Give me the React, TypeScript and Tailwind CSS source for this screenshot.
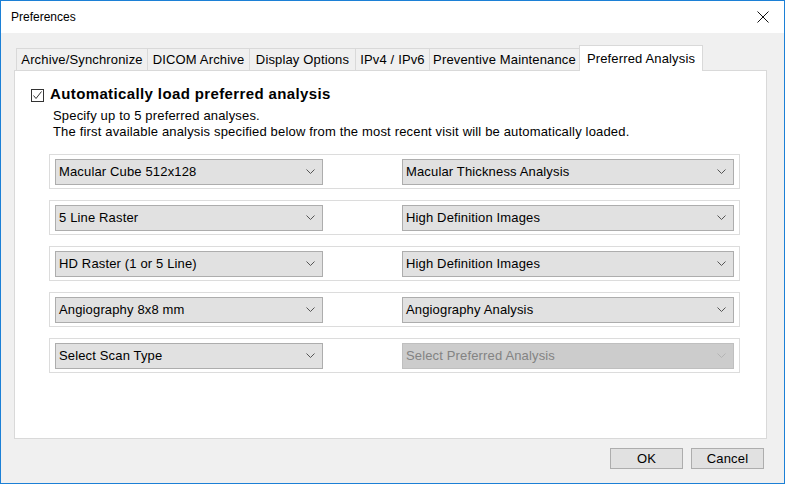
import React from "react"

const tabs = [
  { label: "Archive/Synchronize", w: "w-[132px]" },
  { label: "DICOM Archive", w: "w-[103px]" },
  { label: "Display Options", w: "w-[107px]" },
  { label: "IPv4 / IPv6", w: "w-[75px]" },
  { label: "Preventive Maintenance", w: "w-[151px]" },
]

const rows = [
  ["Macular Cube 512x128", "Macular Thickness Analysis"],
  ["5 Line Raster", "High Definition Images"],
  ["HD Raster (1 or 5 Line)", "High Definition Images"],
  ["Angiography 8x8 mm", "Angiography Analysis"],
  ["Select Scan Type", "Select Preferred Analysis"],
]

function Chevron({ color }: { color: string }) {
  return (
    <svg width="9" height="5" viewBox="0 0 9 5" className="shrink-0">
      <path d="M0.5 0.5 L4.5 4.5 L8.5 0.5" fill="none" stroke={color} strokeWidth="1" />
    </svg>
  )
}

function Select({ value, width, disabled }: { value: string; width: string; disabled?: boolean }) {
  return (
    <div
      className={
        disabled
          ? `${width} h-[26px] flex items-center justify-between pl-[3px] pr-[7px] border border-[#bfbfbf] bg-[#cccccc] text-[#838383]`
          : `${width} h-[26px] flex items-center justify-between pl-[3px] pr-[7px] border border-[#adadad] bg-[#e1e1e1] text-black`
      }
    >
      <span>{value}</span>
      <Chevron color={disabled ? "#b4b4b4" : "#555555"} />
    </div>
  )
}

export default function App() {
  return (
    <div
      className="w-[785px] h-[484px] flex flex-col border border-[#1c80d6] bg-[#f0f0f0] text-[13px] tracking-[0.15px] text-black"
      style={{ fontFamily: '"Liberation Sans", Arial, sans-serif' }}
    >
      {/* title bar */}
      <div className="h-[32px] shrink-0 bg-white flex items-center justify-between pl-[10px] pr-[15px]">
        <span className="text-[12px] tracking-normal">Preferences</span>
        <svg width="12" height="12" viewBox="0 0 12 12">
          <path d="M0.5 0.5 L11.5 11.5 M11.5 0.5 L0.5 11.5" stroke="#111" strokeWidth="1" />
        </svg>
      </div>

      <div className="flex-1 flex flex-col pt-[12px] pl-[13px]">
        {/* tabs */}
        <div className="flex items-end h-[25px] pl-[2px]">
          {tabs.map((t, i) => (
            <div
              key={t.label}
              className={`${t.w} h-[22px] ${i > 0 ? "-ml-px" : ""} flex items-center justify-center border border-b-0 border-[#d9d9d9] bg-[#f0f0f0]`}
            >
              {t.label}
            </div>
          ))}
          <div className="relative w-[124px] h-[26px] -ml-px -mb-px flex items-center justify-center border border-b-0 border-[#d9d9d9] bg-white">
            Preferred Analysis
          </div>
        </div>

        {/* panel */}
        <div className="w-[753px] h-[369px] border border-[#d9d9d9] bg-white pt-[14px] pl-[16px]">
          <div className="flex items-start gap-[6px]">
            <div className="mt-[4px] w-[13px] h-[13px] border border-[#333333] bg-white flex items-center justify-center">
              <svg width="11" height="11" viewBox="0 0 11 11">
                <path d="M1.5 5.5 L4 8.5 L9.5 1.5" fill="none" stroke="#333" strokeWidth="1" />
              </svg>
            </div>
            <div className="text-[15px] leading-[18px] font-bold tracking-[0.38px]">
              Automatically load preferred analysis
            </div>
          </div>
          <div className="mt-[5px] ml-[22px] leading-[16px] tracking-[0.17px]">
            <div>Specify up to 5 preferred analyses.</div>
            <div>The first available analysis specified below from the most recent visit will be automatically loaded.</div>
          </div>

          <div className="mt-[14px] ml-[18px] flex flex-col gap-[11px]">
            {rows.map((r, i) => (
              <div
                key={i}
                className="w-[691px] h-[35px] border border-[#dcdcdc] flex items-center justify-between px-[5px]"
              >
                <Select value={r[0]} width="w-[268px]" />
                <Select value={r[1]} width="w-[332px]" disabled={i === 4} />
              </div>
            ))}
          </div>
        </div>

        {/* buttons */}
        <div className="mt-[9px] flex justify-end gap-[8px] pr-[20px]">
          <button className="w-[73px] h-[21px] border border-[#adadad] bg-[#e1e1e1] text-[13px]">OK</button>
          <button className="w-[73px] h-[21px] border border-[#adadad] bg-[#e1e1e1] text-[13px]">Cancel</button>
        </div>
      </div>
    </div>
  )
}
